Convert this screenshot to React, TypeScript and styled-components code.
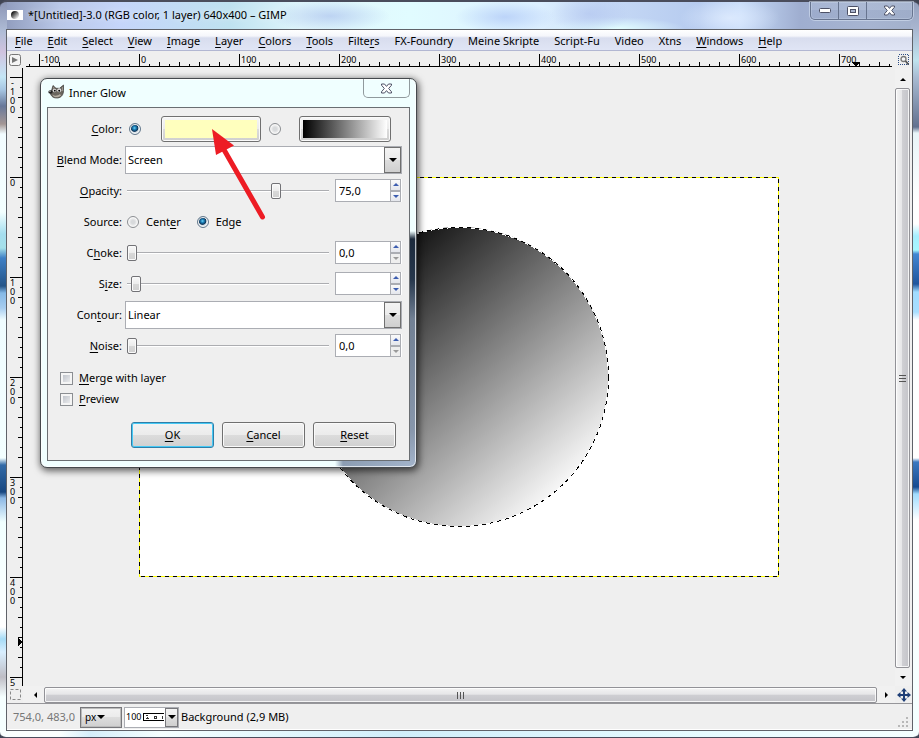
import React from 'react';
import styled, { createGlobalStyle, css } from 'styled-components';

const GlobalStyle = createGlobalStyle`
  * { box-sizing: border-box; }
  body {
    margin: 0;
    background: #3f4453;
    font-family: "Noto Sans", "Open Sans", sans-serif;
    font-size: 11px;
    line-height: 16px;
    color: #000;
  }
  button, input, select { font: inherit; color: inherit; margin: 0; padding: 0; }
  u { text-decoration-thickness: 1px; text-underline-offset: 2px; }
`;

/* ---------- main window ---------- */

const Desktop = styled.div`
  position: relative;
  height: 100vh;
  min-height: 560px;
  display: flex;
  flex-direction: column;
  padding: 0 6px 6px;
  border: solid #4a4d5c;
  border-width: 2px 0 1px;
  border-radius: 7px 7px 6px 6px;
  background:
    linear-gradient(90deg, #fafffe 0 60px, #d5eefa 90px, #f4ffff 160px, #d0eefa 400px, #e6fbff 700px, #f4ffff) 0 100% / 100% 7px no-repeat,
    linear-gradient(#94a1be, #a8b5cf 26px, #bfe3ee 58px, #a9bcd3 75px, #62718f 125px, #e8f4f8 131px, #fff 200px, #fff 222px, #a6efff 234px, #a8f8ff 248px, #4386d2 252px, #1f559d 282px, #a0dcff 290px, #a8deff 310px, #fff 318px, #fff 456px, #3b78c0 460px, #174b91 485px, #a0dcff 492px, #fff 518px, #f3ffff) 100% 0 / 8px 100% no-repeat,
    linear-gradient(#8c96b5, #b0bdd7 30px, #d0c3df 50px, #c4e6f6 75px, #a6c5e2 88px, #68789a 104px, #a39694 122px, #f2fcff 132px, #f3ffff 210px, #a5deef 232px, #a4e0ea 246px, #3e80c6 256px, #245488 284px, #85b9e6 291px, #a7cdf0 306px, #effcff 318px, #f3ffff 456px, #336ba8 463px, #17467f 490px, #8cb8e5 496px, #f0ffff 520px, #fff 625px, #a6dbf6 637px, #d9efff 650px, #bebdc5 675px, #f5ffff 695px) 0 0 / 7px 100% no-repeat,
    radial-gradient(ellipse 60px 16px at 330px 14px, #a6bcec99, transparent),
    radial-gradient(ellipse 50px 16px at 505px 15px, #acc5f6aa, transparent),
    radial-gradient(ellipse 40px 20px at 590px 12px, #b2c5efaa, transparent),
    radial-gradient(ellipse 70px 12px at 615px 27px, #e3ffff, transparent),
    radial-gradient(ellipse 50px 20px at 730px 16px, #e1edffcc, transparent),
    linear-gradient(90deg, #8d99ba 0, #bac8e8 60px, #c5d5fa 120px, #bfe2f0 230px, #dff5fb 300px, #e1fcff 410px, #dcefff 540px, #c7daf6 600px, #b6cbef 700px, #c7dcfa 740px, #9faed0 800px, #a7b5d1 870px, #a2b0cb);
`;

const TitleBar = styled.header`
  flex: 0 0 27px;
  display: flex;
  align-items: flex-start;
  padding-left: 1px;
`;

const TitleIcon = styled.svg`
  margin-top: 8px;
  flex: none;
`;

const Title = styled.h1`
  flex: 1;
  margin: 5px 0 0 5px;
  font-size: 11px;
  line-height: 16px;
  font-weight: 400;
  text-shadow: 0 0 6px #ffffffb0;
  white-space: nowrap;
`;

const CaptionGroup = styled.div`
  display: flex;
  height: 18px;
  border: 1px solid #67748f;
  border-top: 0;
  border-radius: 0 0 5px 5px;
  box-shadow: 0 0 0 1px #dce6f588, inset 0 0 0 1px #dce6f555;
`;

const CaptionButton = styled.button<{ $w: number }>`
  width: ${p => p.$w}px;
  border: 0;
  border-right: 1px solid #67748f;
  background: linear-gradient(#c0cbe033 50%, #8e9ebd33 50%);
  display: flex;
  align-items: center;
  justify-content: center;
  &:last-child { border-right: 0; }
`;

const Client = styled.main`
  flex: 1;
  min-height: 0;
  display: flex;
  flex-direction: column;
  border: 1px solid #5f6269;
  background: #efefef;
`;

const MenuBar = styled.nav`
  flex: 0 0 21px;
  display: flex;
  align-items: flex-end;
  gap: 15px;
  padding-left: 8px;
  overflow: hidden;
  border-bottom: 1px solid #b2b7d2;
  background: linear-gradient(#fff, #f5f6fb 6px, #d8ddee 8px, #e0e5f5);
`;

const MenuItem = styled.button`
  border: 0;
  background: none;
  font-size: 11px;
  line-height: 18px;
  white-space: nowrap;
`;

const Workspace = styled.div`
  flex: 1;
  min-height: 0;
  display: grid;
  grid-template: 17px minmax(0, 1fr) 17px / 16px minmax(0, 1fr) 17px;
`;

const Corner = styled.button`
  border: 0;
  background: none;
  display: flex;
  align-items: center;
  justify-content: center;
`;

const RulerTrack = styled.div<{ $vertical?: boolean }>`
  display: flex;
  justify-content: center;
  overflow: hidden;
  ${p => p.$vertical
    ? css`flex-direction: column;`
    : css`margin: 0 3px;`}
  svg { flex: none; }
  text { font-size: 9px; }
`;

const CanvasArea = styled.section`
  display: flex;
  align-items: center;
  justify-content: center;
  overflow: hidden;
  svg { flex: none; }
`;

const ScrollBar = styled.div<{ $vertical?: boolean }>`
  display: flex;
  background: #f1f1f1;
  ${p => p.$vertical
    ? css`flex-direction: column; padding: 2px 2px 0 0;`
    : css`padding: 1px 0 0 3px;`}
`;

const ScrollArrow = styled.button`
  flex: 0 0 18px;
  border: 0;
  background: #f1f1f1;
  display: flex;
  align-items: center;
  justify-content: center;
`;

const ScrollThumb = styled.div<{ $vertical?: boolean }>`
  flex: 1;
  display: flex;
  align-items: center;
  justify-content: center;
  border: 1px solid #929297;
  border-radius: 2px;
  box-shadow: inset 0 0 0 1px #fffc;
  background: linear-gradient(${p => (p.$vertical ? '90deg' : '180deg')}, #f4f4f4, #e6e6e8 45%, #cfcfd3 50%, #c4c4c9);
`;

const StatusBar = styled.footer`
  flex: 0 0 27px;
  display: flex;
  align-items: center;
  padding-left: 6px;
  border-top: 1px solid #96969a;
  box-shadow: inset 0 -1px #fff;
`;

const Coordinates = styled.output`
  width: 67px;
  color: #777;
  white-space: nowrap;
`;

const UnitButton = styled.button`
  width: 42px;
  height: 21px;
  display: flex;
  align-items: center;
  padding-left: 4px;
  gap: 1px;
  border: 1px solid #77777b;
  outline: 1px solid #bbb;
  outline-offset: -2px;
  background: linear-gradient(#f3f3f3, #ebebeb 50%, #ddd 50%, #cfcfcf);
  font-size: 10px;
`;

const ZoomBox = styled.div`
  display: flex;
  width: 55px;
  height: 21px;
  margin: 0 2px 0 2px;
  border: 1px solid #abadb3;
  background: #fff;
  align-items: center;
`;

const ZoomInput = styled.input`
  width: 17px;
  margin-left: 1px;
  border: 0;
  background: none;
  outline: 0;
  font-size: 9px;
`;

const ZoomArrow = styled.button`
  align-self: stretch;
  margin-left: auto;
  width: 13px;
  display: flex;
  align-items: center;
  justify-content: center;
  border: 1px solid #77777b;
  background: linear-gradient(#f3f3f3, #ebebeb 50%, #ddd 50%, #cfcfcf);
`;

const StatusText = styled.span`
  flex: 1;
  white-space: nowrap;
`;

const Grip = styled.svg`
  align-self: flex-end;
  margin: 0 4px 3px 0;
`;

/* ---------- dialog ---------- */

const Dialog = styled.form`
  position: absolute;
  left: 40px;
  top: 76px;
  width: 377px;
  padding: 0 6px 6px;
  border: 1px solid #45494d;
  border-radius: 7px;
  background:
    linear-gradient(#f0ffff 152px, #1c2a3c 160px, #26374c 200px, #718094 240px, #8796ab 350px, #a3b4cb) 100% 0 / 7px 100% no-repeat,
    linear-gradient(90deg, #f0ffff 294px, #8c9db3 302px, #a3b4cb) 0 100% / 100% 7px no-repeat,
    #f0ffff;
  box-shadow: inset 0 0 0 1px #ffffffb0, 1px 2px 7px 1px #0009;
`;

const DialogTitle = styled.div`
  display: flex;
  align-items: flex-start;
  height: 28px;
`;

const DialogHeading = styled.h2`
  flex: 1;
  margin: 6px 0 0 4px;
  font-size: 11px;
  line-height: 16px;
  font-weight: 400;
`;

const DialogLogo = styled.svg`
  margin: 5px 0 0 1px;
`;

const DialogClose = styled.button`
  width: 47px;
  height: 19px;
  border: 1px solid #909a9d;
  border-top: 0;
  border-radius: 0 0 5px 5px;
  background: none;
  display: flex;
  align-items: center;
  justify-content: center;
`;

const DialogBody = styled.div`
  border: 1px solid #6a6e72;
  background: #efefef;
  padding: 5px 7px 12px;
`;

const Row = styled.div`
  display: grid;
  grid-template-columns: 67px minmax(0, 1fr);
  column-gap: 3px;
  align-items: center;
  height: 31px;
`;

const RowLabel = styled.label`
  justify-self: end;
  white-space: nowrap;
`;

const Controls = styled.div`
  display: flex;
  align-items: center;
`;

const Radio = styled.input.attrs({ type: 'radio' })`
  appearance: none;
  flex: none;
  width: 12px;
  height: 12px;
  border: 1px solid #8b8e92;
  border-radius: 50%;
  background: radial-gradient(circle, #d8dadc 25%, #f4f4f4 60%);
  box-shadow: inset 0 0 0 1px #f8f8f8;
  &:checked {
    border-color: #63788c;
    background: radial-gradient(circle at 45% 40%, #6fd4f6 0, #1b7fb8 20%, #0f3558 42%, #d6e0e8 52%);
  }
`;

const ColorRadio = styled(Radio)`
  margin: 0 20px 0 4px;
  & + button + & { margin: 0 18px 0 8px; }
`;

const SwatchButton = styled.button<{ $fill: string; $w: number }>`
  width: ${p => p.$w}px;
  height: 26px;
  padding: 3px;
  border: 1px solid #707070;
  border-radius: 3px;
  background: linear-gradient(#f6f6f6, #ebebeb 50%, #dcdcdc 50%, #cfcfcf);
  box-shadow: inset 0 0 0 1px #fafafa;
  &::before {
    content: '';
    display: block;
    height: 18px;
    background: ${p => p.$fill};
  }
`;

const Combo = styled.div`
  flex: 1;
  display: grid;
  height: 28px;
`;

const ComboSelect = styled.select`
  grid-area: 1 / 1;
  appearance: none;
  width: 100%;
  border: 1px solid #abadb3;
  border-radius: 0;
  background: #fff;
  padding: 0 20px 0 2px;
`;

const ComboArrow = styled.span`
  grid-area: 1 / 1;
  justify-self: end;
  width: 17px;
  margin: 1px;
  border: 1px solid #707070;
  background: linear-gradient(#f3f3f3, #ebebeb 50%, #ddd 50%, #cfcfcf);
  display: flex;
  align-items: center;
  justify-content: center;
  pointer-events: none;
`;

const Slider = styled.input.attrs({ type: 'range' })`
  appearance: none;
  flex: 1;
  min-width: 0;
  height: 18px;
  margin: 0 6px 0 2px;
  background: linear-gradient(#acadb1 50%, #fff 50%) 0 50% / 100% 2px no-repeat;
  &::-webkit-slider-thumb {
    appearance: none;
    width: 10px;
    height: 16px;
    border: 1px solid #727276;
    border-radius: 2px;
    background: linear-gradient(#f8f8f8, #ececec 50%, #d8d8d8 50%, #d0d0d0);
    box-shadow: inset 0 0 0 1px #fafafa;
  }
`;

const SpinBox = styled.div`
  display: flex;
  width: 67px;
  height: 23px;
  border: 1px solid #fff;
  border-width: 0 1px 0 0;
`;

const SpinInput = styled.input`
  flex: 1;
  min-width: 0;
  border: 1px solid #abadb3;
  border-right: 0;
  padding-left: 3px;
  background: #fff;
  outline: 0;
`;

const SpinButtons = styled.div`
  display: flex;
  flex-direction: column;
  width: 11px;
`;

const SpinButton = styled.button`
  flex: 1;
  border: 1px solid #abadb3;
  background: linear-gradient(#fafafa, #e4e6ec);
  display: flex;
  align-items: center;
  justify-content: center;
  color: #3c5db0;
  &:disabled { color: #9a9a9a; background: #eee; }
`;

const RadioLabel = styled.label`
  display: flex;
  align-items: center;
  gap: 7px;
  margin: 0 14px 0 2px;
`;

const Checks = styled.div`
  display: flex;
  flex-direction: column;
  align-items: flex-start;
  gap: 5px;
  padding: 9px 0 0 5px;
`;

const CheckLabel = styled.label`
  display: flex;
  align-items: center;
  gap: 6px;
`;

const Check = styled.input.attrs({ type: 'checkbox' })`
  appearance: none;
  width: 13px;
  height: 13px;
  border: 1px solid #8b8e92;
  background: linear-gradient(135deg, #b4b9c2, #f6f6f6);
  box-shadow: inset 0 0 0 2px #f5f5f5;
`;

const Actions = styled.div`
  display: flex;
  justify-content: flex-end;
  gap: 8px;
  margin-top: 15px;
  padding-right: 6px;
`;

const ActionButton = styled.button<{ $primary?: boolean }>`
  width: 83px;
  height: 26px;
  border: 1px solid ${p => (p.$primary ? '#2f7ea8' : '#707070')};
  border-radius: 3px;
  background: linear-gradient(#f3f3f3, #ebebeb 50%, #dcdcdc 50%, #d0d0d0);
  box-shadow: inset 0 0 0 1px ${p => (p.$primary ? '#45c9f5' : '#fafafa')};
`;

const Pointer = styled.svg`
  position: absolute;
  left: 170px;
  top: 48px;
  pointer-events: none;
`;

/* ---------- small drawings ---------- */

const Arrow = ({ dir, size = 4, color = '#000' }: { dir: 'up' | 'down' | 'left' | 'right'; size?: number; color?: string }) => {
  const w = size * 2;
  const d = {
    up: `M0 ${size}L${size} 0L${w} ${size}Z`,
    down: `M0 0H${w}L${size} ${size}Z`,
    left: `M${size} 0V${w}L0 ${size}Z`,
    right: `M0 0V${w}L${size} ${size}Z`,
  }[dir];
  const flat = dir === 'up' || dir === 'down';
  return (
    <svg width={flat ? w : size} height={flat ? size : w} aria-hidden="true">
      <path d={d} fill={color} />
    </svg>
  );
};

const CloseGlyph = () => (
  <svg width="13" height="11" viewBox="0 0 13 11" aria-hidden="true">
    <path d="M1.5 1h3l2 2.4 2-2.4h3v1.2L8.7 5.5l2.8 3.3V10h-3l-2-2.4-2 2.4h-3V8.800l2.800-3.300L1.500 2.200z" fill="#fff" stroke="#4d5166" />
  </svg>
);

const range = (from: number, to: number, step: number) =>
  Array.from({ length: Math.floor((to - from) / step) + 1 }, (_, i) => from + i * step);

const tickLength = (v: number) => (v % 100 === 0 ? 13 : v % 20 === 0 ? 5 : 3);

/* The ruler drawings are wider than their tracks and share the image's centre. */
const HorizontalRuler = () => {
  const zero = 680;
  return (
    <svg width="2000" height="17" shapeRendering="crispEdges" role="img" aria-label="Horizontal ruler">
      <rect y="15" width="2000" height="1" />
      {range(-600, 1300, 10).map(v => (
        <rect key={v} x={zero + v} y={16 - tickLength(v)} width="1" height={tickLength(v)} />
      ))}
      {range(-100, 700, 100).map(v => (
        <text key={v} x={zero + v + 2} y="12">{v}</text>
      ))}
      <path d={`M${zero + 712} 11h9l-4 4z`} />
    </svg>
  );
};

const VERTICAL_LABELS: [number, string][] = [
  [-100, '-100'], [0, '0'], [100, '100'], [200, '200'], [300, '300'], [400, '400'], [500, '5'],
];

const VerticalRuler = () => {
  const zero = 800;
  return (
    <svg width="16" height="2000" shapeRendering="crispEdges" role="img" aria-label="Vertical ruler">
      <rect x="15" width="1" height="2000" />
      {range(-700, 1100, 10).map(v => (
        <rect key={v} y={zero + v} x={16 - tickLength(v)} height="1" width={tickLength(v)} />
      ))}
      {VERTICAL_LABELS.map(([v, label]) =>
        label.split('').map((c, i) => (
          <text key={`${v}-${i}`} x={c === '-' ? 4 : 3} y={zero + v + 9 + i * 9}>{c}</text>
        ))
      )}
      <path d={`M11 ${zero + 460}v9l4 -4z`} />
    </svg>
  );
};

const ImageCanvas = () => (
  <svg width="640" height="400" viewBox="0 0 640 400" role="img" aria-label="Image">
    <defs>
      <linearGradient id="sphere" gradientUnits="userSpaceOnUse" x1="210" y1="84" x2="430" y2="316">
        <stop offset="0" stopColor="#000" />
        <stop offset="1" stopColor="#fff" />
      </linearGradient>
    </defs>
    <rect width="640" height="400" fill="#fff" />
    <circle cx="320" cy="200" r="150" fill="url(#sphere)" />
    <g fill="none" shapeRendering="crispEdges">
      <circle cx="320" cy="200" r="149.500" stroke="#fff" />
      <circle cx="320" cy="200" r="149.500" stroke="#000" strokeDasharray="4 4" />
      <rect x="0.500" y="0.500" width="639" height="399" stroke="#ffff00" />
      <rect x="0.500" y="0.500" width="639" height="399" stroke="#000" strokeDasharray="4 4" />
    </g>
  </svg>
);

const Wilber = () => (
  <DialogLogo width="17" height="16" viewBox="0 0 17 16" aria-hidden="true">
    <path d="M4 5L5 1.500l3 2.800 3.500 0L15.500 1v5.500c0 4-2 7-6 7.500-4 .3-6-1.500-7-4z" fill="#6a665f" stroke="#3a3835" strokeWidth=".7" />
    <path d="M5.500 3L6 5M14.500 3v4" stroke="#9a958c" />
    <circle cx="6.500" cy="6.500" r="1.800" fill="#ddd" />
    <circle cx="11.200" cy="6.300" r="2" fill="#e4e4e4" />
    <circle cx="6.800" cy="6.700" r=".9" />
    <circle cx="11.200" cy="6.700" r="1" />
    <ellipse cx="2.500" cy="8" rx="2.200" ry="1.700" fill="#222" />
    <circle cx="2" cy="7.400" r=".6" fill="#ccc" />
    <path d="M4.500 10.500c2 1.800 5 1.500 7.500-.5l1 1.500c-2 2-6 2.500-8 .5z" fill="#b5aea2" />
  </DialogLogo>
);

/* ---------- composed parts ---------- */

/* Draws a label with its mnemonic letter, marked by "_", underlined. */
const Mnemonic = ({ text }: { text: string }) => {
  const i = text.indexOf('_');
  if (i < 0) return <>{text}</>;
  return <span>{text.slice(0, i)}<u>{text[i + 1]}</u>{text.slice(i + 2)}</span>;
};

const ComboRow = ({ id, label, value }: { id: string; label: string; value: string }) => (
  <Row>
    <RowLabel htmlFor={id}><Mnemonic text={label} /></RowLabel>
    <Combo>
      <ComboSelect id={id} defaultValue={value}><option>{value}</option></ComboSelect>
      <ComboArrow><Arrow dir="down" /></ComboArrow>
    </Combo>
  </Row>
);

const SliderRow = ({ id, label, position, value, atMin }: { id: string; label: string; position: number; value: string; atMin?: boolean }) => (
  <Row>
    <RowLabel htmlFor={id}><Mnemonic text={label} /></RowLabel>
    <Controls>
      <Slider aria-label={`${id} slider`} defaultValue={position} />
      <SpinBox>
        <SpinInput id={id} defaultValue={value} />
        <SpinButtons>
          <SpinButton type="button" aria-label={`Increase ${id}`}><Arrow dir="up" size={3} color="currentColor" /></SpinButton>
          <SpinButton type="button" aria-label={`Decrease ${id}`} disabled={atMin}><Arrow dir="down" size={3} color="currentColor" /></SpinButton>
        </SpinButtons>
      </SpinBox>
    </Controls>
  </Row>
);

const InnerGlowDialog = () => (
  <Dialog onSubmit={e => e.preventDefault()}>
    <DialogTitle>
      <Wilber />
      <DialogHeading>Inner Glow</DialogHeading>
      <DialogClose type="button" aria-label="Close dialog"><CloseGlyph /></DialogClose>
    </DialogTitle>
    <DialogBody>
      <Row>
        <RowLabel htmlFor="solid"><Mnemonic text="_Color:" /></RowLabel>
        <Controls>
          <ColorRadio id="solid" name="fill" defaultChecked />
          <SwatchButton type="button" aria-label="Glow color" $fill="#ffffbe" $w={100} />
          <ColorRadio name="fill" aria-label="Gradient" />
          <SwatchButton type="button" aria-label="Glow gradient" $fill="linear-gradient(90deg, #000, #fff)" $w={92} />
        </Controls>
      </Row>
      <ComboRow id="blend" label="_Blend Mode:" value="Screen" />
      <SliderRow id="opacity" label="_Opacity:" position={75} value="75,0" />
      <Row role="radiogroup" aria-label="Source">
        <RowLabel as="span">Source:</RowLabel>
        <Controls>
          <RadioLabel><Radio name="source" /><Mnemonic text="Cent_er" /></RadioLabel>
          <RadioLabel><Radio name="source" defaultChecked /><span>Edge</span></RadioLabel>
        </Controls>
      </Row>
      <SliderRow id="choke" label="C_hoke:" position={0} value="0,0" atMin />
      <SliderRow id="size" label="S_ize:" position={2} value="" />
      <ComboRow id="contour" label="Con_tour:" value="Linear" />
      <SliderRow id="noise" label="_Noise:" position={0} value="0,0" atMin />
      <Checks>
        <CheckLabel><Check /><Mnemonic text="_Merge with layer" /></CheckLabel>
        <CheckLabel><Check /><Mnemonic text="_Preview" /></CheckLabel>
      </Checks>
      <Actions>
        <ActionButton $primary><Mnemonic text="_OK" /></ActionButton>
        <ActionButton type="button"><Mnemonic text="_Cancel" /></ActionButton>
        <ActionButton type="reset"><Mnemonic text="_Reset" /></ActionButton>
      </Actions>
    </DialogBody>
    <Pointer width="60" height="96" viewBox="0 0 60 96" aria-hidden="true">
      <path d="M51.500 90L12 21" stroke="#ed1c24" strokeWidth="5" strokeLinecap="round" />
      <path d="M1 2L23 18.500L5 28Z" fill="#ed1c24" />
    </Pointer>
  </Dialog>
);

const MENUS = ['_File', '_Edit', '_Select', '_View', '_Image', '_Layer', '_Colors', '_Tools', 'Filte_rs', 'FX-Foundry', 'Meine Skripte', 'Script-Fu', 'Video', 'Xtns', '_Windows', '_Help'];

export default function App() {
  return (
    <>
      <GlobalStyle />
      <Desktop>
        <TitleBar>
          <TitleIcon width="16" height="10" aria-hidden="true">
            <defs>
              <linearGradient id="thumb" x1="0" y1="0" x2="1" y2="1">
                <stop offset="0.100" stopColor="#000" />
                <stop offset="0.900" stopColor="#fff" />
              </linearGradient>
            </defs>
            <rect width="16" height="10" fill="#fff" />
            <circle cx="8" cy="5" r="4" fill="url(#thumb)" />
          </TitleIcon>
          <Title>*[Untitled]-3.0 (RGB color, 1 layer) 640x400 – GIMP</Title>
          <CaptionGroup>
            <CaptionButton $w={28} aria-label="Minimize">
              <svg width="12" height="5"><rect x=".5" y=".5" width="11" height="4" rx="1" fill="#fff" stroke="#4d5166" /></svg>
            </CaptionButton>
            <CaptionButton $w={28} aria-label="Maximize">
              <svg width="12" height="10">
                <rect x=".5" y=".5" width="11" height="9" rx="1" fill="#fff" stroke="#4d5166" />
                <rect x="3.500" y="3.500" width="5" height="3" fill="#a9b5cf" stroke="#4d5166" />
              </svg>
            </CaptionButton>
            <CaptionButton $w={45} aria-label="Close"><CloseGlyph /></CaptionButton>
          </CaptionGroup>
        </TitleBar>
        <Client>
          <MenuBar>
            {MENUS.map(m => <MenuItem key={m}><Mnemonic text={m} /></MenuItem>)}
          </MenuBar>
          <Workspace>
            <Corner aria-label="Image menu">
              <svg width="12" height="12">
                <rect x=".5" y=".5" width="11" height="11" rx="2" fill="#f4f4f4" stroke="#777" />
                <path d="M3 3l6 3-6 3z" fill="#777" />
              </svg>
            </Corner>
            <RulerTrack><HorizontalRuler /></RulerTrack>
            <Corner aria-label="Zoom image when window size changes">
              <svg width="11" height="11">
                <rect x=".5" y=".5" width="10" height="10" fill="none" stroke="#2f4f86" strokeDasharray="1 1" shapeRendering="crispEdges" />
                <circle cx="5.500" cy="5" r="2.500" fill="#f4f6f8" stroke="#777" strokeWidth="1.300" />
                <path d="M7.500 7l3 3.500" stroke="#555" strokeWidth="1.800" />
              </svg>
            </Corner>
            <RulerTrack $vertical><VerticalRuler /></RulerTrack>
            <CanvasArea><ImageCanvas /></CanvasArea>
            <ScrollBar $vertical>
              <ScrollArrow aria-label="Scroll up"><Arrow dir="up" size={3} /></ScrollArrow>
              <ScrollThumb $vertical>
                <svg width="7" height="9" shapeRendering="crispEdges"><path d="M0 1.500h7M0 4.500h7M0 7.500h7" stroke="#555" /></svg>
              </ScrollThumb>
              <ScrollArrow aria-label="Scroll down"><Arrow dir="down" size={3} /></ScrollArrow>
            </ScrollBar>
            <Corner aria-label="Toggle quick mask">
              <svg width="11" height="11"><rect x=".5" y=".5" width="10" height="10" fill="none" stroke="#888" strokeDasharray="3 2" /></svg>
            </Corner>
            <ScrollBar>
              <ScrollArrow aria-label="Scroll left"><Arrow dir="left" size={3} /></ScrollArrow>
              <ScrollThumb>
                <svg width="9" height="7" shapeRendering="crispEdges"><path d="M1.500 0v7M4.500 0v7M7.500 0v7" stroke="#555" /></svg>
              </ScrollThumb>
              <ScrollArrow aria-label="Scroll right"><Arrow dir="right" size={3} /></ScrollArrow>
            </ScrollBar>
            <Corner aria-label="Navigate image">
              <svg width="14" height="14">
                <path d="M7 0l3 3.500H8V6h2.500V4L14 7l-3.500 3V8H8v2.500h2L7 14l-3-3.500h2V8H3.500v2L0 7l3.500-3v2H6V3.500H4z" fill="#1f3f77" />
              </svg>
            </Corner>
          </Workspace>
          <StatusBar>
            <Coordinates>754,0, 483,0</Coordinates>
            <UnitButton>px<Arrow dir="down" /></UnitButton>
            <ZoomBox>
              <ZoomInput aria-label="Zoom" defaultValue="100" />
              <svg width="21" height="9" aria-hidden="true" shapeRendering="crispEdges">
                <path d="M21 .5H.5v7H21" fill="none" stroke="#000" />
                <path d="M3 2.500h2M4 4.500h1M3 5.500h3M11 3.500h3M11 5.500h3M11.500 3v3M13.500 3v3M19.500 3v3" fill="none" stroke="#333" />
              </svg>
              <ZoomArrow aria-label="Choose zoom"><Arrow dir="down" /></ZoomArrow>
            </ZoomBox>
            <StatusText>Background (2,9 MB)</StatusText>
            <Grip width="10" height="10" aria-hidden="true">
              <path d="M8 1h2M8 5h2M4 5h2M8 9h2M4 9h2M0 9h2" stroke="#b8b8b8" strokeWidth="2" />
            </Grip>
          </StatusBar>
        </Client>
        <InnerGlowDialog />
      </Desktop>
    </>
  );
}
